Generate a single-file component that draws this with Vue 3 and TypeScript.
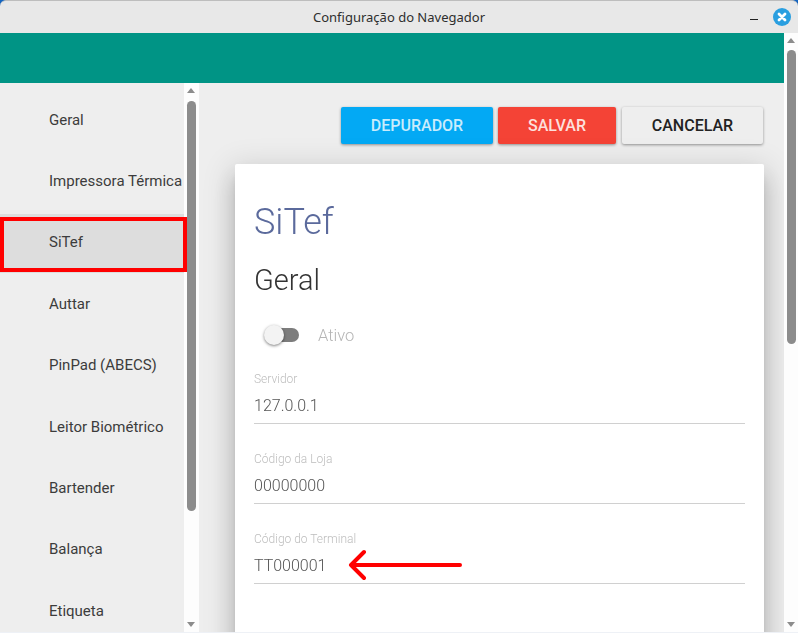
<script setup lang="ts">
const items: string[] = ['Geral', 'Impressora Térmica', 'SiTef', 'Auttar', 'PinPad (ABECS)', 'Leitor Biométrico', 'Bartender', 'Balança', 'Etiqueta']
const fields = [
  { label: 'Servidor', value: '127.0.0.1' },
  { label: 'Código da Loja', value: '00000000' },
  { label: 'Código do Terminal', value: 'TT000001' },
]
</script>

<template>
  <div class="window">
    <header class="titlebar">
      <span class="title">Configuração do Navegador</span>
      <span class="minimize"></span>
      <svg class="close" width="18" height="18" viewBox="0 0 18 18">
        <circle cx="9" cy="9" r="9" fill="#2a9fe0" />
        <path d="M6 6 L12 12 M12 6 L6 12" stroke="#fff" stroke-width="2.8" stroke-linecap="round" />
      </svg>
    </header>
    <div class="frame">
      <div class="content">
        <div class="teal"></div>
        <div class="panes">
          <nav class="sidebar">
            <a v-for="item in items" :key="item" class="item" :class="{ selected: item === 'SiTef' }">{{ item }}</a>
            <div class="redbox"></div>
          </nav>
          <div class="scrollbar side">
            <span class="up"></span>
            <span class="thumb"></span>
            <span class="down"></span>
          </div>
          <main class="main">
            <div class="actions">
              <button class="btn blue">DEPURADOR</button>
              <button class="btn red">SALVAR</button>
              <button class="btn plain">CANCELAR</button>
            </div>
            <section class="card">
              <h1>SiTef</h1>
              <h2>Geral</h2>
              <div class="toggle-row">
                <span class="toggle"><span class="knob"></span></span>
                <span class="toggle-label">Ativo</span>
              </div>
              <div class="fields">
                <div v-for="f in fields" :key="f.label" class="field">
                  <label>{{ f.label }}</label>
                  <div class="value">{{ f.value }}</div>
                </div>
              </div>
              <svg class="arrow" width="120" height="36" viewBox="0 0 120 36">
                <path d="M113 18 H4 M17 5 L4 18 L17 31" fill="none" stroke="#f00" stroke-width="4" stroke-linecap="round" stroke-linejoin="round" />
              </svg>
            </section>
          </main>
        </div>
      </div>
      <div class="scrollbar outer">
        <span class="up"></span>
        <span class="thumb"></span>
        <span class="down"></span>
      </div>
    </div>
  </div>
</template>

<style scoped>
.window {
  width: 798px;
  height: 633px;
  box-sizing: border-box;
  border-bottom: 1px solid #eef1f6;
  display: flex;
  flex-direction: column;
  overflow: hidden;
  font-family: Roboto, sans-serif;
}
.titlebar {
  height: 33px;
  flex: none;
  box-sizing: border-box;
  border-top: 1px solid #bdbdbd;
  background: #e8e8e8;
  border-radius: 6px 6px 0 0;
  display: flex;
  align-items: center;
  justify-content: center;
  position: relative;
}
.title {
  font-family: "Noto Sans", sans-serif;
  font-size: 13px;
  color: #2e2e2e;
}
.minimize {
  position: absolute;
  left: 750px;
  top: 18px;
  width: 8px;
  height: 1px;
  background: #222;
}
.close {
  position: absolute;
  left: 773px;
  top: 7px;
}
.frame {
  flex: 1;
  min-height: 0;
  display: flex;
}
.content {
  width: 784px;
  display: flex;
  flex-direction: column;
  min-height: 0;
}
.teal {
  height: 50px;
  flex: none;
  background: #009485;
}
.panes {
  flex: 1;
  display: flex;
  min-height: 0;
}
.sidebar {
  width: 184px;
  flex: none;
  background: #eee;
  box-sizing: border-box;
  padding-top: 6px;
  position: relative;
}
.item {
  display: flex;
  align-items: center;
  height: 61.4px;
  padding-left: 49px;
  font-size: 15px;
  color: #3c3c3c;
}
.item.selected {
  background: linear-gradient(#eee 2px, #ddd 2px);
}
.redbox {
  position: absolute;
  left: 0;
  top: 134px;
  width: 187px;
  height: 55px;
  box-sizing: border-box;
  border: 4px solid #f00;
  z-index: 2;
}
.scrollbar {
  flex: none;
  background: #fdfdfd;
  position: relative;
}
.scrollbar.side {
  width: 15px;
}
.scrollbar.outer {
  width: 14px;
}
.up,
.down {
  position: absolute;
  left: 3px;
  width: 0;
  height: 0;
  border-left: 4.5px solid transparent;
  border-right: 4.5px solid transparent;
}
.up {
  top: 5px;
  border-bottom: 5px solid #8c8c8c;
}
.down {
  bottom: 5px;
  border-top: 5px solid #8c8c8c;
}
.thumb {
  position: absolute;
  left: 3px;
  width: 9px;
  background: #8c8c8c;
  border-radius: 4.5px;
}
.side .thumb {
  top: 18px;
  height: 410px;
}
.outer .thumb {
  left: 3px;
  top: 17px;
  height: 294px;
}
.main {
  flex: 1;
  min-width: 0;
  background: #eee;
  overflow: hidden;
  box-sizing: border-box;
  padding: 24px 21px 0 36px;
}
.actions {
  display: flex;
  justify-content: flex-end;
  gap: 5px;
  height: 37px;
}
.btn {
  height: 37px;
  border: none;
  border-radius: 2px;
  font-family: Roboto, sans-serif;
  font-size: 16px;
  font-weight: 500;
  padding: 0;
  box-shadow: 0 1px 3px rgba(0, 0, 0, 0.4);
}
.blue {
  width: 152px;
  background: #03a9f4;
  color: #c9ecfc;
}
.red {
  width: 118px;
  background: #f44336;
  color: #fde0dd;
}
.plain {
  width: 141px;
  margin-left: 1px;
  background: #eee;
  color: #222;
}
.card {
  margin-top: 20px;
  width: 529px;
  box-sizing: border-box;
  height: 520px;
  padding: 1px 19px 0;
  background: #fff;
  border-radius: 2px;
  box-shadow: 0 8px 10px -5px rgba(0, 0, 0, 0.2), 0 16px 24px 2px rgba(0, 0, 0, 0.14), 0 6px 30px 5px rgba(0, 0, 0, 0.12);
  position: relative;
  transform: translateZ(0);
}
h1 {
  margin: 37px 0 0;
  height: 40px;
  line-height: 40px;
  font-size: 36px;
  font-weight: 300;
  color: #5b6a9c;
}
h2 {
  margin: 23px 0 0;
  height: 30px;
  line-height: 30px;
  font-size: 29px;
  font-weight: 300;
  color: #333;
}
.toggle-row {
  margin-top: 28px;
  height: 24px;
  display: flex;
  align-items: center;
  padding-left: 11px;
}
.toggle {
  width: 34px;
  height: 14px;
  border-radius: 7px;
  background: #7d7d7d;
  position: relative;
}
.knob {
  position: absolute;
  left: -1px;
  top: -3px;
  width: 20px;
  height: 20px;
  border-radius: 50%;
  background: #f3f3f3;
  box-shadow: 0 1px 3px rgba(0, 0, 0, 0.5);
}
.toggle-label {
  margin-left: 19px;
  font-size: 16.5px;
  font-weight: 300;
  color: #b5b5b5;
}
.fields {
  margin-top: 25px;
  display: flex;
  flex-direction: column;
  gap: 28px;
}
.field {
  height: 51px;
  border-bottom: 1px solid #d0d0d0;
}
.field label {
  display: block;
  height: 14px;
  line-height: 14px;
  font-size: 12px;
  font-weight: 300;
  color: #bdbdbd;
}
.value {
  margin-top: 8px;
  line-height: 24px;
  font-size: 16px;
  font-weight: 300;
  color: #555;
}
.arrow {
  position: absolute;
  left: 112px;
  top: 383px;
}
</style>

<style>
html,
body {
  margin: 0;
  background: #1565c0;
}
</style>
